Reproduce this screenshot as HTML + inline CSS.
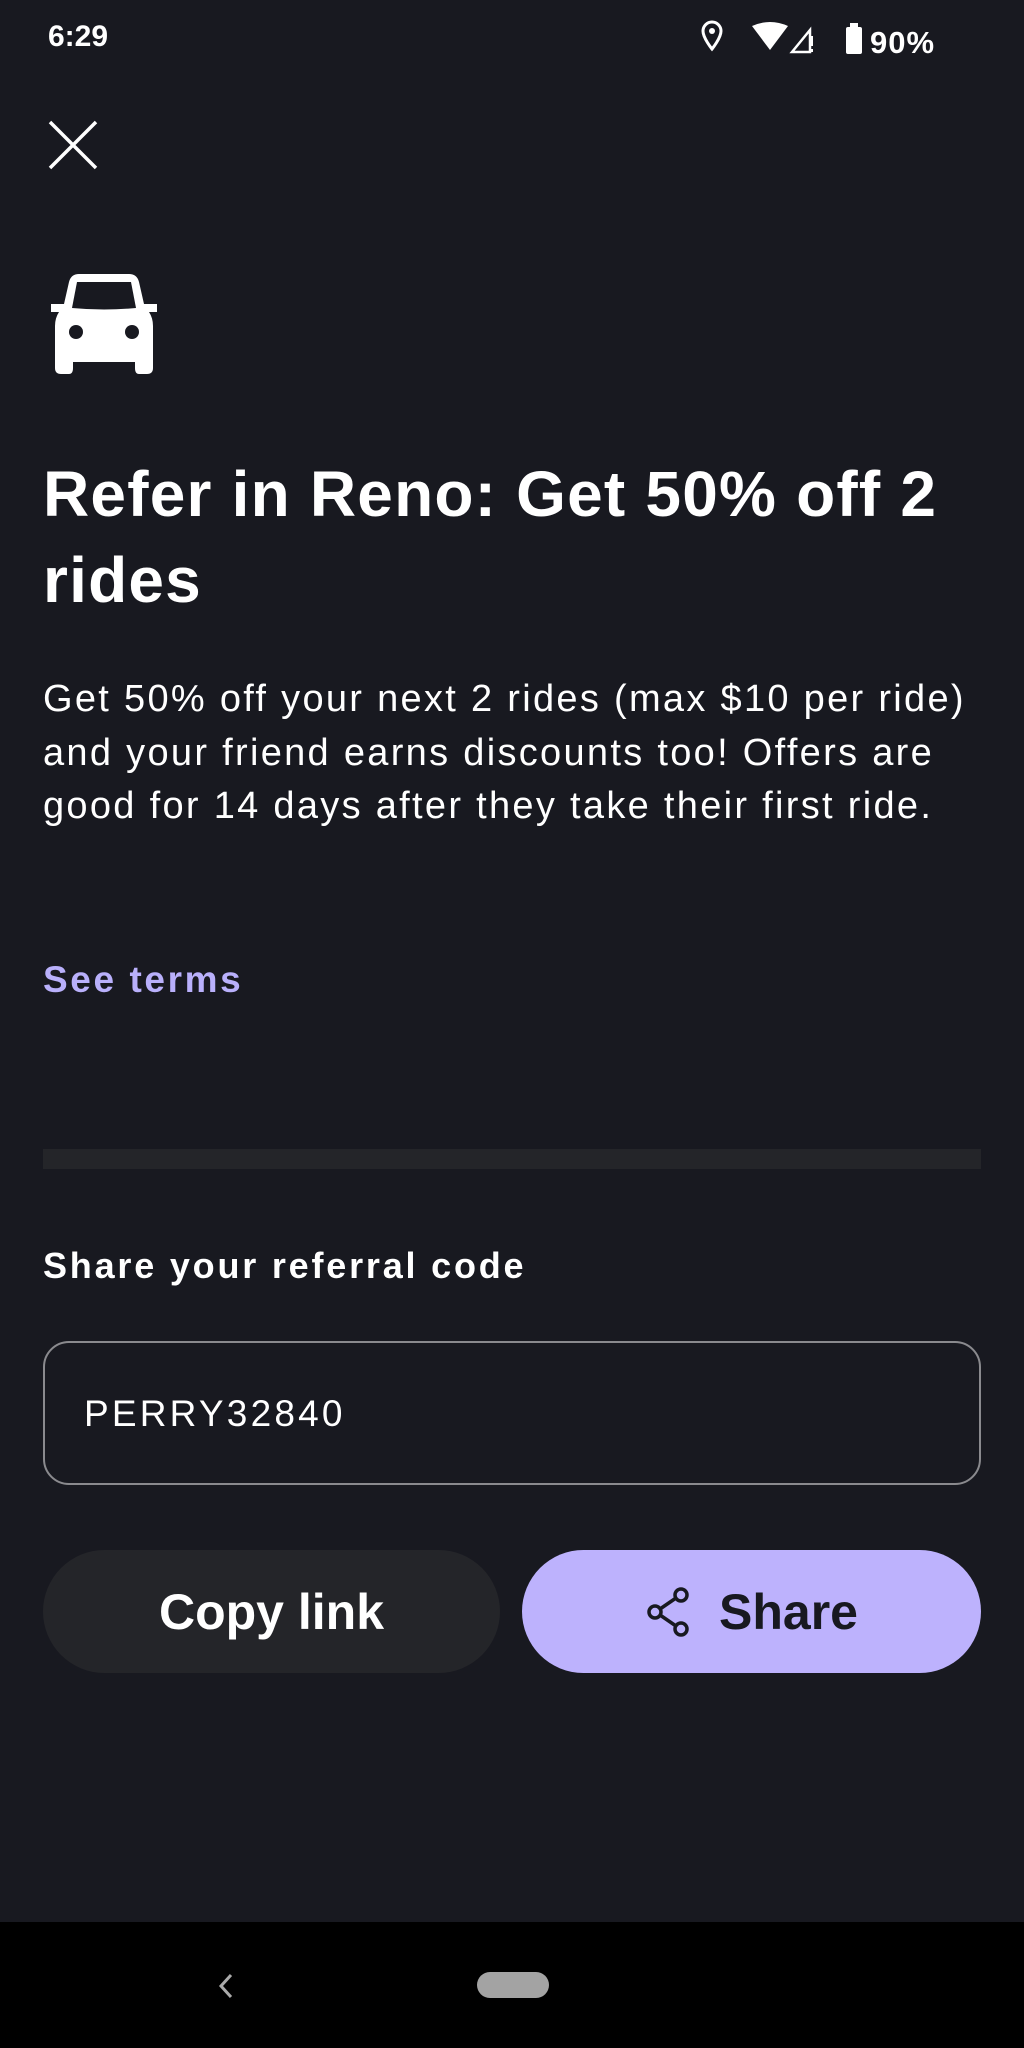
<!DOCTYPE html>
<html><head><meta charset="utf-8"><style>
*{margin:0;padding:0;box-sizing:border-box}
body{width:1024px;height:2048px;background:#181920;color:#fff;font-family:"Liberation Sans",sans-serif;position:relative;overflow:hidden}
.a{position:absolute}
</style></head><body>
<div class="a" style="left:48px;top:20px;font-size:30px;font-weight:bold;">6:29</div>
<svg class="a" style="left:698px;top:18px" width="290" height="40" viewBox="0 0 290 40">
<path d="M14 4a9 9 0 0 0-9 9c0 7 9 18 9 18s9-11 9-18a9 9 0 0 0-9-9z" fill="none" stroke="#fff" stroke-width="3"/><circle cx="14" cy="13" r="3" fill="#fff"/>
<path d="M54 8q18-8 36 0l-18 24z" fill="#fff"/>
<path d="M94 34l18-22v22z" fill="none" stroke="#fff" stroke-width="2.5"/><rect x="112" y="18" width="3" height="10" fill="#fff"/><rect x="112" y="31" width="3" height="3" fill="#fff"/>
<rect x="148" y="9" width="16" height="27" rx="2" fill="#fff"/><rect x="152" y="5" width="8" height="5" fill="#fff"/>
<text x="172" y="35" font-family="Liberation Sans" font-size="31" font-weight="bold" fill="#fff" letter-spacing="1">90%</text>
</svg>
<svg class="a" style="left:48px;top:120px" width="50" height="50"><path d="M2 2L48 48M48 2L2 48" stroke="#fff" stroke-width="3.5"/></svg>
<svg class="a" style="left:49px;top:274px" width="110" height="100" viewBox="0 0 110 100">
<path d="M30 0H80Q88 0 90 8L95 30H108V38H100Q104 44 104 52V94Q104 100 98 100H90Q86 100 86 94V88H24V94Q24 100 20 100H12Q6 100 6 94V52Q6 44 10 38H2V30H15L20 8Q22 0 30 0Z" fill="#fff"/>
<path d="M28 8H82L87 34Q55 37 23 34Z" fill="#181920"/>
<ellipse cx="27" cy="58" rx="7" ry="7" fill="#181920"/><ellipse cx="83" cy="58" rx="7" ry="7" fill="#181920"/>
</svg>
<div class="a" style="left:43px;top:451px;width:980px;font-size:64px;font-weight:bold;line-height:86px;letter-spacing:1.2px;">Refer in Reno: Get 50% off 2<br>rides</div>
<div class="a" style="left:43px;top:673px;width:1000px;font-size:38px;line-height:53.5px;letter-spacing:2.3px;white-space:nowrap;">Get 50% off your next 2 rides (max $10 per ride)<br>and your friend earns discounts too! Offers are<br>good for 14 days after they take their first ride.</div>
<div class="a" style="left:43px;top:959px;font-size:37px;font-weight:bold;color:#b9b0fb;letter-spacing:2.6px;">See terms</div>
<div class="a" style="left:43px;top:1149px;width:938px;height:20px;background:#242529"></div>
<div class="a" style="left:43px;top:1245px;font-size:36px;font-weight:bold;letter-spacing:2.8px;">Share your referral code</div>
<div class="a" style="left:43px;top:1341px;width:938px;height:144px;border:2px solid #8a8a8e;border-radius:26px"></div>
<div class="a" style="left:84px;top:1393px;font-size:37px;letter-spacing:3.2px;">PERRY32840</div>
<div class="a" style="left:43px;top:1550px;width:457px;height:123px;border-radius:62px;background:#242529;display:flex;align-items:center;justify-content:center;font-size:50px;font-weight:bold;">Copy link</div>
<div class="a" style="left:522px;top:1550px;width:459px;height:123px;border-radius:62px;background:#bdb2fd;display:flex;align-items:center;justify-content:center;font-size:50px;font-weight:bold;color:#181920;">
<svg width="48" height="52" viewBox="0 0 48 52" style="margin-right:26px"><g fill="none" stroke="#181920" stroke-width="3.5"><circle cx="36" cy="9" r="6"/><circle cx="36" cy="43" r="6"/><circle cx="10" cy="26" r="6"/><path d="M15 23l16-11M15 29l16 11"/></g></svg>Share</div>
<div class="a" style="left:0;top:1922px;width:1024px;height:126px;background:#000"></div>
<svg class="a" style="left:214px;top:1972px" width="24" height="28"><path d="M17 3L7 14l10 11" fill="none" stroke="#aaa" stroke-width="3"/></svg>
<div class="a" style="left:477px;top:1972px;width:72px;height:26px;border-radius:13px;background:#a3a3a3"></div>
</body></html>
